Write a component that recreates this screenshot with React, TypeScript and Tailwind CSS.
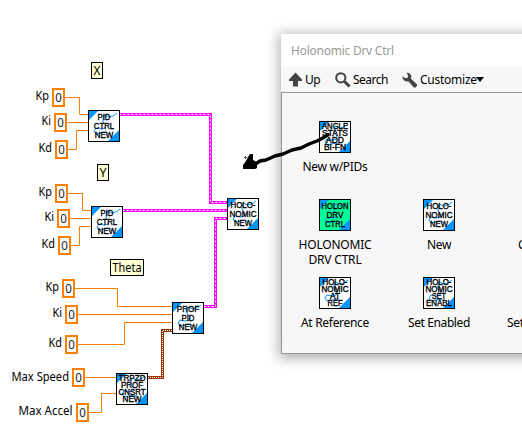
import React from "react";

const UI_FONT = "font-['Noto_Sans','Open_Sans',sans-serif]";

type BlockProps = { lines: string[]; widths: number[]; fill?: string };

/** A 32x32 LabVIEW block icon: blue corners, a squiggle and stacked captions. */
function Block({ lines, widths, fill = "#ffffff" }: BlockProps) {
  const four = lines.length === 4;
  return (
    <svg width="32" height="32" viewBox="0 0 32 32" className="block shrink-0">
      <rect width="32" height="32" fill="#000" />
      <rect x="1" y="1" width="30" height="30" fill={fill} />
      <path d="M1 1H10L1 10Z" fill="#0094ff" />
      <path d="M31 20V31H20Z" fill="#0094ff" />
      <path
        d="M29 3L25 6L21 7L16 5L15 9L15 12L18 15L17 18L13 19L8 18L6 21L8 24L13 23L18 22L21 24"
        fill="none"
        stroke="#0094ff"
        strokeWidth="1"
      />
      {lines.map((line, i) => (
        <text
          key={i}
          x={16 - widths[i] / 2}
          y={four ? 8 + i * 7 : 10 + i * 9}
          textLength={widths[i]}
          lengthAdjust="spacingAndGlyphs"
          className="font-['Liberation_Sans',sans-serif]"
          fontSize={four ? 8.2 : 9}
          fill="#000"
          stroke="#000"
          strokeWidth="0.35"
        >
          {line}
        </text>
      ))}
    </svg>
  );
}

const holo = { lines: ["HOLO-", "NOMIC", "NEW"], widths: [25, 27, 18] };
const pid = { lines: ["PID", "CTRL", "NEW"], widths: [13, 20.5, 18.5] };

const nodes = [
  { x: 88, y: 110, ...pid },
  { x: 91, y: 206, ...pid },
  { x: 227, y: 198, ...holo },
  { x: 172, y: 302, lines: ["PROF", "PID", "NEW"], widths: [22.5, 13, 18.5] },
  { x: 116, y: 373, lines: ["TRPZD", "PROF", "CNSRT", "NEW"], widths: [27, 22, 27, 19] },
];

const constants = [
  { label: "Kp", tx: 35.5, ty: 100, tw: 13.5, x: 52, y: 88 },
  { label: "Ki", tx: 41.5, ty: 125, tw: 9.5, x: 54, y: 113 },
  { label: "Kd", tx: 38.5, ty: 152, tw: 13.5, x: 55, y: 140 },
  { label: "Kp", tx: 38.5, ty: 196, tw: 13.5, x: 55, y: 184 },
  { label: "Ki", tx: 44.5, ty: 221, tw: 9.5, x: 57, y: 209 },
  { label: "Kd", tx: 41.5, ty: 248, tw: 13.5, x: 58, y: 236 },
  { label: "Kp", tx: 45.5, ty: 291, tw: 13.5, x: 62, y: 279 },
  { label: "Ki", tx: 52.5, ty: 317, tw: 9.5, x: 65, y: 305 },
  { label: "Kd", tx: 48.5, ty: 347, tw: 13.5, x: 65, y: 335 },
  { label: "Max Speed", tx: 11.5, ty: 381, tw: 57.5, x: 72, y: 368 },
  { label: "Max Accel", tx: 18.5, ty: 415, tw: 54, x: 76, y: 403 },
];

const tags = [
  { label: "X", x: 91, y: 62, w: 12, tw: 7 },
  { label: "Y", x: 97, y: 164, w: 12, tw: 7 },
  { label: "Theta", x: 110, y: 259, w: 34, tw: 29 },
];

const orangeWires = [
  "M65 97.5H79.5V114.5H88",
  "M67 122.5H88",
  "M68 149.5H76.5V130.5H88",
  "M68 193.5H82.5V210.5H91",
  "M70 218.5H91",
  "M71 245.5H79.5V226.5H91",
  "M75 288.5H117.5V306.5H172",
  "M78 314.5H172",
  "M78 344.5H124.5V322.5H172",
  "M85 377.5H116",
  "M89 412.5H101.5V393.5H116",
];

const pinkWires = [
  "M120 114.5H210.5V202.5H227",
  "M123 210.5H227",
  "M204 306.5H215.5V218.5H227",
];

const brownWire = "M148 377.5H162.5V330.5H172";

function Diagram() {
  return (
    <svg width="522" height="433" viewBox="0 0 522 433" className="block">
      <g fill="none" stroke="#ff8000">
        {orangeWires.map((d) => (
          <path key={d} d={d} />
        ))}
      </g>
      {pinkWires.map((d) => (
        <g key={d} fill="none">
          <path d={d} stroke="#ff00ff" strokeWidth="3" />
          <path d={d} stroke="#ffffff" strokeWidth="1" strokeDasharray="2 2" strokeDashoffset="0.5" />
        </g>
      ))}
      <path d={brownWire} fill="none" stroke="#993300" strokeWidth="3" />
      <path d={brownWire} fill="none" stroke="#fff" strokeDasharray="1 1" />
      {tags.map((t) => (
        <g key={t.label}>
          <rect x={t.x + 0.5} y={t.y + 0.5} width={t.w - 1} height="16" fill="#ffffd5" stroke="#000" />
          <text
            x={t.x + (t.w - t.tw) / 2}
            y={t.y + 13}
            textLength={t.tw}
            lengthAdjust="spacingAndGlyphs"
            fontSize="12"
            className={UI_FONT}
          >
            {t.label}
          </text>
        </g>
      ))}
      {constants.map((c) => (
        <g key={c.label + c.y} className={UI_FONT} fontSize="12">
          <text x={c.tx} y={c.ty} textLength={c.tw} lengthAdjust="spacingAndGlyphs">
            {c.label}
          </text>
          <rect x={c.x + 1} y={c.y + 1} width="11" height="17" fill="#fff" stroke="#ff8000" strokeWidth="2" />
          <text x={c.x + 3.2} y={c.y + 14} textLength="6.6" lengthAdjust="spacingAndGlyphs" fill="#222">
            0
          </text>
        </g>
      ))}
      {nodes.map((n) => (
        <g key={n.x + "-" + n.y} transform={`translate(${n.x} ${n.y})`}>
          <Block lines={n.lines} widths={n.widths} />
        </g>
      ))}
    </svg>
  );
}

type Item = { label: string; lines: string[]; widths: number[]; fill?: string; tracking: string };

const rows: Item[][] = [
  [{ label: "New w/PIDs", lines: ["ANGLE", "STATS", "ADD", "BI-FN"], widths: [26, 26, 18, 22], tracking: "tracking-[-0.3px]" }],
  [
    { label: "HOLONOMIC DRV CTRL", lines: ["HOLON", "DRV", "CTRL"], widths: [27, 17, 20], fill: "#00ff99", tracking: "tracking-[-0.2px]" },
    { label: "New", ...holo, tracking: "tracking-[-0.4px]" },
  ],
  [
    { label: "At Reference", lines: ["HOLO-", "NOMIC", "AT", "REF"], widths: [25, 27, 10, 15], tracking: "tracking-[-0.3px]" },
    { label: "Set Enabled", lines: ["HOLO-", "NOMIC", "SET", "ENABL"], widths: [25, 27, 14, 26], tracking: "tracking-[-0.4px]" },
  ],
];

function PaletteItem({ item }: { item: Item }) {
  return (
    <div className="flex h-[78px] w-[104px] shrink-0 flex-col items-center">
      <Block lines={item.lines} widths={item.widths} fill={item.fill} />
      <div className={`mt-[6px] w-20 text-center text-[12px] leading-[15px] ${item.tracking}`}>{item.label}</div>
    </div>
  );
}

function Palette() {
  return (
    <div
      className={`absolute left-[281px] top-[34px] flex h-[320px] w-[300px] flex-col bg-[#f7f7f7] text-black shadow-[0_2px_12px_2px_rgba(0,0,0,0.32)] ${UI_FONT}`}
    >
      <div className="flex h-[33px] shrink-0 items-center bg-white pl-[10px] text-[12px] tracking-[-0.25px] text-[#999999]">
        Holonomic Drv Ctrl
      </div>
      <div className="flex h-[25px] shrink-0 items-center pl-2 text-[12px]">
        <svg width="13" height="15" viewBox="0 0 13 15" className="shrink-0">
          <path d="M6.5 0.5L13 7.5V9H9V14.5H4V9H0V7.5Z" fill="#444" />
        </svg>
        <span className="ml-[3px] w-[30px] tracking-[-0.4px]">Up</span>
        <svg width="16" height="16" viewBox="0 0 16 16" className="shrink-0" fill="none" stroke="#444">
          <circle cx="5.8" cy="5.8" r="4.6" strokeWidth="2" />
          <path d="M9.5 9.5L14.5 14.5" strokeWidth="3" />
        </svg>
        <span className="ml-[2px] w-[49px] tracking-[-0.5px]">Search</span>
        <svg width="16" height="16" viewBox="0 0 16 16" className="shrink-0">
          <path
            d="M4.5 0.5L7.5 1.2L9.3 3.5L9 6.7L15 12.5V14L13.5 15.5H12L6.5 9.5L3.2 9.2L0.8 7L0.5 4.3L3 6H5.2L6 5L5.8 3Z"
            fill="#444"
          />
        </svg>
        <span className="ml-[2px] w-[57px] tracking-[-0.25px]">Customize</span>
        <svg width="8" height="5" viewBox="0 0 8 5" className="-ml-px shrink-0">
          <path d="M0 0H8L4 5Z" fill="#000" />
        </svg>
      </div>
      <div className="flex min-h-0 flex-1 flex-col border-b border-l border-t border-[#999999] pl-px pt-7">
        {rows.map((row, r) => (
          <div key={r} className="flex">
            {row.map((item) => (
              <PaletteItem key={item.label} item={item} />
            ))}
            {r > 0 && (
              <div className={`pt-[38px] text-[12px] leading-[15px] tracking-[-0.3px] ${r === 1 ? "pl-[27px]" : "pl-4"}`}>
                {r === 1 ? "C" : "Set"}
              </div>
            )}
          </div>
        ))}
      </div>
    </div>
  );
}

/** Hand-drawn arrow laid over the palette and the diagram. */
function InkArrow() {
  return (
    <svg width="522" height="433" viewBox="0 0 522 433" className="pointer-events-none absolute left-0 top-0">
      <path
        d="M328 134.5L323 138L317 141L309 144L301 148L292 150L283 154L275 156L266 160L260 161L254 165"
        fill="none"
        stroke="#000"
        strokeWidth="3.4"
        strokeLinejoin="round"
        strokeLinecap="round"
      />
      <path d="M250 154H253V160L257 162V168L255 169H243V165L246 161L248 157Z" />
      <path d="M244 157.5H247M245.5 156V159" stroke="#000" strokeWidth="0.6" fill="none" />
    </svg>
  );
}

export default function App() {
  return (
    <main className="relative h-[433px] w-[522px] overflow-hidden bg-white">
      <Diagram />
      <Palette />
      <InkArrow />
    </main>
  );
}
